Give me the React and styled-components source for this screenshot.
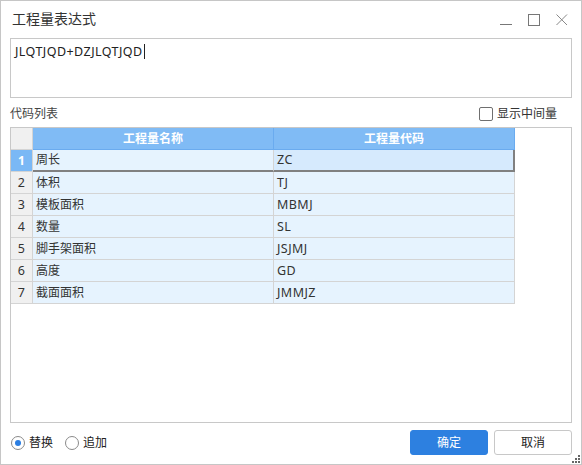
import React from 'react';
import styled, { createGlobalStyle } from 'styled-components';

const GlobalStyle = createGlobalStyle`
  html, body {
    margin: 0;
    padding: 0;
    background: #ffffff;
  }
  * {
    box-sizing: border-box;
  }
`;

const FONT = `"Noto Sans", "Noto Sans CJK SC", sans-serif`;

const Window = styled.div`
  width: 582px;
  height: 465px;
  border: 1px solid #c6c6c6;
  background: #fff;
  font-family: ${FONT};
  color: #333;
  display: flex;
  flex-direction: column;
  position: relative;
`;

const TitleBar = styled.div`
  height: 37px;
  display: flex;
  align-items: center;
  padding: 0 0 0 11px;
`;

const Title = styled.div`
  flex: 1;
  font-size: 14px;
  line-height: 18px;
  color: #333;
  margin-top: -1px;
`;

const WinButtons = styled.div`
  display: flex;
  align-items: center;
  margin-right: 5px;
`;

const WinButton = styled.div`
  width: 28px;
  height: 20px;
  display: flex;
  align-items: center;
  justify-content: center;
`;

const Expression = styled.div`
  margin: 0 9px 0 9px;
  height: 60px;
  border: 1px solid #c8c8c8;
  padding: 4px 4px;
  font-size: 12.5px;
  letter-spacing: 0.45px;
  line-height: 18px;
  color: #222;
`;

const Caret = styled.span`
  display: inline-block;
  width: 1px;
  height: 15px;
  background: #222;
  vertical-align: -3px;
  margin-left: 1px;
`;

const LabelRow = styled.div`
  display: flex;
  align-items: center;
  justify-content: space-between;
  margin: 0 9px;
  height: 29px;
  padding-top: 2px;
`;

const Label = styled.span`
  font-size: 12px;
  line-height: 16px;
  color: #444;
`;

const CheckWrap = styled.label`
  display: flex;
  align-items: center;
  gap: 4px;
  margin-right: 15px;
  font-size: 12px;
  line-height: 16px;
  color: #333;
`;

const CheckBox = styled.span`
  width: 14px;
  height: 14px;
  border: 1px solid #6f6f6f;
  border-radius: 2px;
  background: #fff;
`;

const Grid = styled.div`
  margin: 0 9px;
  height: 296px;
  border: 1px solid #c8c8c8;
  background: #fff;
`;

const Row = styled.div`
  display: flex;
  height: 22px;
`;

const Cell = styled.div`
  width: ${p => p.$w}px;
  height: 22px;
  flex: none;
  border-right: 1px solid ${p => (p.$head ? '#6aabef' : '#d4d4d4')};
  border-bottom: 1px solid ${p => (p.$head ? '#6aabef' : '#d4d4d4')};
  background: ${p => p.$bg};
  font-size: ${p => (p.$latin ? 12.5 : 12)}px;
  letter-spacing: ${p => (p.$latin ? 0.45 : 0)}px;
  line-height: 21px;
  padding-left: ${p => (p.$center ? 0 : 3)}px;
  text-align: ${p => (p.$center ? 'center' : 'left')};
  color: ${p => p.$color || '#333'};
  font-weight: ${p => (p.$bold ? 700 : 400)};
  white-space: nowrap;
  overflow: hidden;
`;

const SelCell = styled(Cell)`
  border-bottom: 2px solid #808080;
  line-height: 20px;
`;

const CurrentCell = styled(SelCell)`
  border-right: 2px solid #808080;
`;

const Footer = styled.div`
  flex: 1;
  display: flex;
  align-items: center;
  padding: 0 9px 2px 10px;
`;

const Radios = styled.div`
  flex: 1;
  display: flex;
  align-items: center;
  gap: 12px;
`;

const RadioWrap = styled.label`
  display: flex;
  align-items: center;
  gap: 4px;
  font-size: 12px;
  line-height: 16px;
  color: #222;
`;

const RadioCircle = styled.span`
  width: 14px;
  height: 14px;
  border-radius: 50%;
  border: 1px solid #8a8a8a;
  background: #fff;
  display: flex;
  align-items: center;
  justify-content: center;
  &::after {
    content: '';
    width: 6px;
    height: 6px;
    border-radius: 50%;
    background: ${p => (p.$on ? '#2b7ee2' : 'transparent')};
  }
`;

const Buttons = styled.div`
  display: flex;
  gap: 6px;
`;

const Button = styled.button`
  width: 78px;
  height: 25px;
  border-radius: 3px;
  font-family: ${FONT};
  font-size: 12px;
  line-height: 16px;
  padding: 0;
  border: 1px solid ${p => (p.$primary ? '#2d80e0' : '#c8c8c8')};
  background: ${p => (p.$primary ? '#2d80e0' : '#fff')};
  color: ${p => (p.$primary ? '#fff' : '#222')};
`;

const Grip = styled.svg`
  position: absolute;
  right: 1px;
  bottom: 1px;
`;

const rows = [
  ['周长', 'ZC'],
  ['体积', 'TJ'],
  ['模板面积', 'MBMJ'],
  ['数量', 'SL'],
  ['脚手架面积', 'JSJMJ'],
  ['高度', 'GD'],
  ['截面面积', 'JMMJZ'],
];

const NUM_W = 22;
const COL_W = 241;
const ROW_BG = '#e6f3fe';

export default function App() {
  return (
    <>
      <GlobalStyle />
      <Window>
        <TitleBar>
          <Title>工程量表达式</Title>
          <WinButtons>
            <WinButton>
              <svg width="14" height="14" viewBox="0 0 14 14">
                <line x1="1" y1="11.5" x2="13" y2="11.5" stroke="#777" strokeWidth="1" />
              </svg>
            </WinButton>
            <WinButton>
              <svg width="14" height="14" viewBox="0 0 14 14">
                <rect x="1.5" y="1.5" width="11" height="11" fill="none" stroke="#777" strokeWidth="1" />
              </svg>
            </WinButton>
            <WinButton>
              <svg width="14" height="14" viewBox="0 0 14 14">
                <path d="M1.5 1.5 L12 12 M12 1.5 L1.5 12" stroke="#888" strokeWidth="1" />
              </svg>
            </WinButton>
          </WinButtons>
        </TitleBar>

        <Expression>
          JLQTJQD+DZJLQTJQD<Caret />
        </Expression>

        <LabelRow>
          <Label>代码列表</Label>
          <CheckWrap>
            <CheckBox />
            显示中间量
          </CheckWrap>
        </LabelRow>

        <Grid>
          <Row>
            <Cell $w={NUM_W} $bg="#f0f0f0" $center />
            <Cell $w={COL_W} $bg="#80bbf5" $head $center $color="#fff" $bold>
              工程量名称
            </Cell>
            <Cell $w={COL_W} $bg="#80bbf5" $head $center $color="#fff" $bold>
              工程量代码
            </Cell>
          </Row>
          {rows.map(([name, code], i) =>
            i === 0 ? (
              <Row key={name}>
                <Cell $w={NUM_W} $bg="#7ab8f5" $center $color="#fff" $bold>
                  {i + 1}
                </Cell>
                <SelCell $w={COL_W} $bg={ROW_BG}>
                  {name}
                </SelCell>
                <CurrentCell $w={COL_W} $bg="#d6eafd" $latin>
                  {code}
                </CurrentCell>
              </Row>
            ) : (
              <Row key={name}>
                <Cell $w={NUM_W} $bg="#f0f0f0" $center $latin>
                  {i + 1}
                </Cell>
                <Cell $w={COL_W} $bg={ROW_BG}>
                  {name}
                </Cell>
                <Cell $w={COL_W} $bg={ROW_BG} $latin>
                  {code}
                </Cell>
              </Row>
            )
          )}
        </Grid>

        <Footer>
          <Radios>
            <RadioWrap>
              <RadioCircle $on />
              替换
            </RadioWrap>
            <RadioWrap>
              <RadioCircle />
              追加
            </RadioWrap>
          </Radios>
          <Buttons>
            <Button $primary>确定</Button>
            <Button>取消</Button>
          </Buttons>
        </Footer>

        <Grip width="8" height="8" viewBox="0 0 8 8">
          <rect x="6" y="0" width="2" height="2" fill="#666" />
          <rect x="3" y="3" width="2" height="2" fill="#666" />
          <rect x="6" y="3" width="2" height="2" fill="#666" />
          <rect x="0" y="6" width="2" height="2" fill="#666" />
          <rect x="3" y="6" width="2" height="2" fill="#666" />
          <rect x="6" y="6" width="2" height="2" fill="#666" />
        </Grip>
      </Window>
    </>
  );
}
